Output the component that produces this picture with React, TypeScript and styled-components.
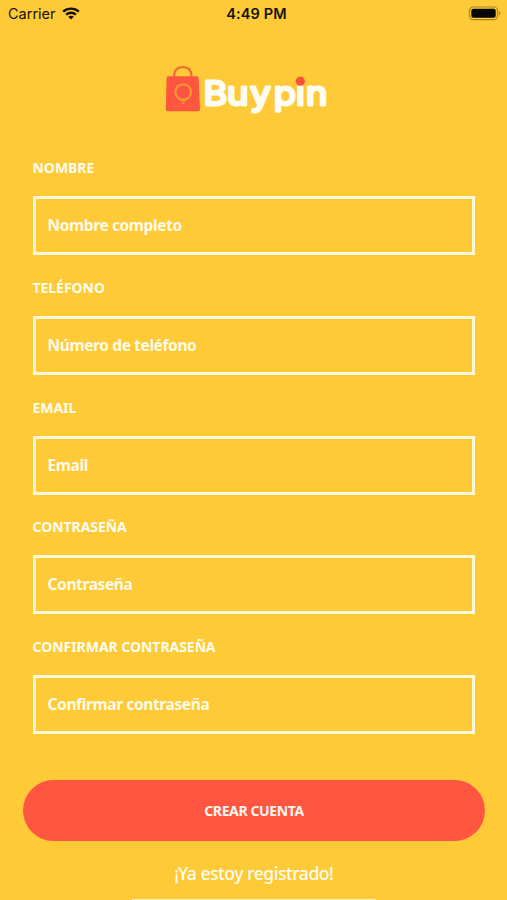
import React from "react";
import styled, { createGlobalStyle } from "styled-components";

const GlobalStyle = createGlobalStyle`
  * { box-sizing: border-box; }
  html, body { margin: 0; padding: 0; background: #ffca38; }
`;

const Screen = styled.div`
  width: 507px;
  height: 900px;
  overflow: hidden;
  display: flex;
  flex-direction: column;
  background: #ffca38;
  font-family: "Noto Sans", "Open Sans", sans-serif;
  color: #fffdf0;
`;

const StatusBar = styled.header`
  height: 27px;
  flex: none;
  display: grid;
  grid-template-columns: 1fr auto 1fr;
  align-items: center;
  padding: 0 6px 0 8px;
  font-family: Inter, sans-serif;
  font-size: 14.5px;
  color: #171306;
`;

const Carrier = styled.div`
  display: flex;
  align-items: center;
  gap: 6px;
`;

const Clock = styled.time`
  font-weight: 600;
  font-size: 14.5px;
  letter-spacing: 0.1px;
  padding-left: 4px;
`;

const Battery = styled.svg`
  justify-self: end;
`;

const Brand = styled.div`
  height: 129.3px;
  flex: none;
  padding: 36px 0 0 163px;
`;

const Form = styled.form`
  display: flex;
  flex-direction: column;
  padding: 0 32px 0 32.5px;
`;

const Field = styled.label`
  display: flex;
  flex-direction: column;
  height: 119.67px;
`;

const FieldName = styled.span`
  height: 40px;
  line-height: 24px;
  font-size: 14px;
  font-weight: 700;
  letter-spacing: -0.04px;
  white-space: nowrap;
`;

const Input = styled.input`
  height: 59px;
  width: 100%;
  border: 3px solid #fff8d9;
  border-radius: 0;
  outline: none;
  padding: 0 12px 1px;
  background: transparent;
  color: #fffbe6;
  font: 700 15.5px "Noto Sans", "Open Sans", sans-serif;
  letter-spacing: -0.38px;
  &::placeholder {
    color: #fffbe6;
    opacity: 1;
  }
`;

const Submit = styled.button`
  height: 61px;
  margin: 25px -10px 0 -9.5px;
  border: 0;
  border-radius: 31px;
  background: #ff5641;
  color: #fff6ee;
  font: 700 14px "Noto Sans", "Open Sans", sans-serif;
  letter-spacing: -0.38px;
`;

const LoginLink = styled.a`
  align-self: center;
  margin-top: 19px;
  line-height: 26px;
  font-size: 17.5px;
  font-weight: 500;
  letter-spacing: -0.46px;
  white-space: nowrap;
`;

const HomeIndicator = styled.div`
  width: 244px;
  height: 2px;
  margin: auto 0 -1px 132px;
  flex: none;
  background: #fff0ba;
`;

const fields = [
  { name: "NOMBRE", hint: "Nombre completo", type: "text" },
  { name: "TELÉFONO", hint: "Número de teléfono", type: "tel" },
  { name: "EMAIL", hint: "Email", type: "email" },
  { name: "CONTRASEÑA", hint: "Contraseña", type: "password" },
  { name: "CONFIRMAR CONTRASEÑA", hint: "Confirmar contraseña", type: "password" },
];

function WifiIcon() {
  return (
    <svg width="18" height="13" viewBox="0 0 18 13" fill="none" stroke="#171306" strokeWidth="2.4">
      <path d="M1.2 4.6C5.6.6 12.4.6 16.8 4.6" />
      <path d="M4.1 7.6c2.8-2.5 7-2.5 9.8 0" />
      <path d="M6.2 9.8c1.6-1.4 4-1.4 5.6 0L9 12.6z" fill="#171306" stroke="none" />
    </svg>
  );
}

function Logo() {
  return (
    <svg width="168" height="58" viewBox="163 63 168 58" role="img" aria-label="Buypin">
      <path d="M174.3 78v-3.2c0-10.4 17-10.4 17 0V78" fill="none" stroke="#ee6b36" strokeWidth="2.2" />
      <path d="M168.3 76.3h28.6q1.6 0 1.8 1.7l1.3 31q.1 2.2-2 2.2h-30.3q-2.1 0-2-2.2l.9-31q.1-1.7 1.7-1.7z" fill="#ff5641" />
      <circle cx="183.2" cy="92" r="7.8" fill="none" stroke="#f79a35" strokeWidth="2" />
      <path d="M181 100.6h4.4M182 103.2h2.4" fill="none" stroke="#f79a35" strokeWidth="1.6" />
      <text
        x="185 206.4 227.5 248.9 269 278.2"
        y="105.4"
        transform="scale(1.1 1)"
        fontFamily="Inter, sans-serif"
        fontWeight="400"
        fontSize="33"
        fill="#fffdf3"
        stroke="#fffdf3"
        strokeWidth="2.8"
        strokeLinejoin="round"
        strokeLinecap="round"
      >
        Buypin
      </text>
      <circle cx="300.3" cy="81.2" r="4.6" fill="#ff5234" />
    </svg>
  );
}

export default function App() {
  return (
    <>
      <GlobalStyle />
      <Screen>
        <StatusBar>
          <Carrier>
            Carrier
            <WifiIcon />
          </Carrier>
          <Clock>4:49 PM</Clock>
          <Battery width="33" height="15" viewBox="0 0 33 15">
            <rect x="1.5" y="1" width="28" height="12.6" rx="3.6" fill="none" stroke="#a9862a" strokeWidth="1.2" />
            <rect x="3.3" y="2.8" width="24.4" height="9" rx="2" fill="#080600" />
            <path d="M31 5v4.4q1.4-.6 1.4-2.2T31 5z" fill="#a9862a" />
          </Battery>
        </StatusBar>
        <Brand>
          <Logo />
        </Brand>
        <Form>
          {fields.map((f) => (
            <Field key={f.name}>
              <FieldName>{f.name}</FieldName>
              <Input type={f.type} placeholder={f.hint} />
            </Field>
          ))}
          <Submit type="button">CREAR CUENTA</Submit>
          <LoginLink>¡Ya estoy registrado!</LoginLink>
        </Form>
        <HomeIndicator />
      </Screen>
    </>
  );
}
